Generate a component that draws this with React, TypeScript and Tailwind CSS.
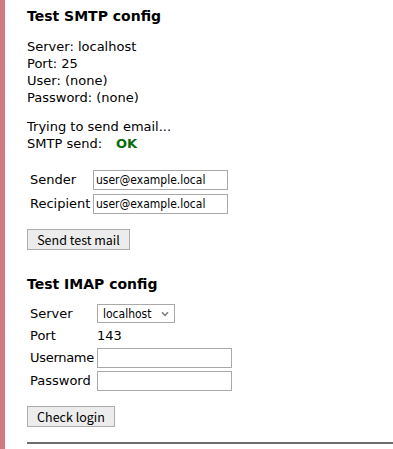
import React from 'react';

const font = { fontFamily: '"DejaVu Sans", Verdana, sans-serif' };
const inputFont = { fontFamily: '"DejaVu Sans Condensed", "DejaVu Sans", sans-serif' };

function Field({ value }: { value?: string }) {
  return (
    <div
      className="h-[20px] w-[135px] border border-[#a9a9a9] bg-white px-[2px] text-[12px] leading-[18px] text-black"
      style={inputFont}
    >
      {value}
    </div>
  );
}

function Btn({ label, width }: { label: string; width: string }) {
  return (
    <button
      className={`h-[21px] ${width} border border-[#adadad] bg-[#ececec] text-[12.5px] leading-[19px] text-black`}
      style={{ fontFamily: '"Noto Sans CJK JP", "DejaVu Sans", sans-serif' }}
    >
      {label}
    </button>
  );
}

export default function App() {
  return (
    <div className="flex min-h-[449px] w-[393px] bg-white text-black" style={font}>
      <div className="w-[5px] shrink-0 bg-[#cf7a82]" />
      <div className="flex-1 pl-[22px] pt-[7px]">
        {/* SMTP */}
        <h2 className="text-[14px] font-bold leading-[18px]">Test SMTP config</h2>
        <div className="mt-[13px] text-[13px] leading-[17px]">
          <div>Server: localhost</div>
          <div>Port: 25</div>
          <div>User: (none)</div>
          <div>Password: (none)</div>
        </div>
        <div className="mt-[12px] text-[13px] leading-[17px]">
          <div>Trying to send email...</div>
          <div>
            SMTP send:<span className="ml-[14px] font-bold text-[#0a6b0a]">OK</span>
          </div>
        </div>

        <div className="mt-[18px] flex flex-col gap-[4px] pl-[3px] text-[13px] leading-[20px]">
          <div className="flex items-center">
            <span className="w-[63px]">Sender</span>
            <Field value="user@example.local" />
          </div>
          <div className="flex items-center">
            <span className="w-[63px]">Recipient</span>
            <Field value="user@example.local" />
          </div>
        </div>

        <div className="mt-[14px]">
          <Btn label="Send test mail" width="w-[103px]" />
        </div>

        {/* IMAP */}
        <h2 className="mt-[23px] text-[14px] font-bold leading-[18px]">Test IMAP config</h2>
        <div className="mt-[11px] flex flex-col gap-[3px] pl-[3px] text-[13px]">
          <div className="flex h-[19px] items-center">
            <span className="w-[67px]">Server</span>
            <div
              className="flex h-[19px] w-[78px] items-center justify-between border border-[#a9a9a9] bg-white pl-[5px] pr-[5px] text-[12px]"
              style={inputFont}
            >
              <span>localhost</span>
              <svg width="8" height="6" viewBox="0 0 8 6" className="mt-[1px]">
                <path d="M1 1.2 L4 4.5 L7 1.2" fill="none" stroke="#777" strokeWidth="1.4" />
              </svg>
            </div>
          </div>
          <div className="flex h-[19px] items-center">
            <span className="w-[67px]">Port</span>
            <span>143</span>
          </div>
          <div className="flex items-center">
            <span className="w-[67px] tracking-[-0.3px]">Username</span>
            <Field />
          </div>
          <div className="flex items-center">
            <span className="w-[67px]">Password</span>
            <Field />
          </div>
        </div>

        <div className="mt-[14px]">
          <Btn label="Check login" width="w-[88px]" />
        </div>

        <div className="mt-[13px] h-[2px] bg-[#6e6e6e]" />
      </div>
    </div>
  );
}
